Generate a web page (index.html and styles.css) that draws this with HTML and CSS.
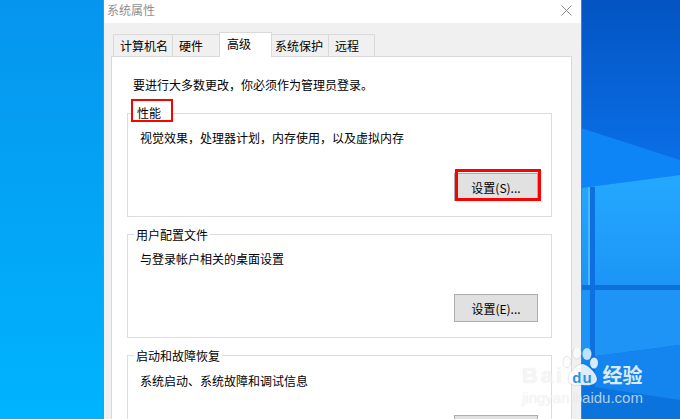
FILE: index.html
```html
<!DOCTYPE html>
<html lang="zh-CN">
<head>
    <meta charset="UTF-8">
    <title>系统属性</title>
    <link rel="stylesheet" href="styles.css">
</head>
<body>
    <svg class="wallpaper" viewBox="0 0 680 419" width="680" height="419">
        <defs>
            <linearGradient id="wall-left" x1="0" y1="0" x2="0" y2="1">
                <stop offset="0" stop-color="#0695ee"/>
                <stop offset="1" stop-color="#00b4ff"/>
            </linearGradient>
            <linearGradient id="wall-right" x1="0" y1="0" x2="0" y2="1">
                <stop offset="0" stop-color="#0454c2"/>
                <stop offset="0.4" stop-color="#0a70e8"/>
                <stop offset="1" stop-color="#0a74dc"/>
            </linearGradient>
            <linearGradient id="pane-top" x1="0" y1="0" x2="0" y2="1">
                <stop offset="0" stop-color="#24a8ff"/>
                <stop offset="1" stop-color="#1c95f6"/>
            </linearGradient>
        </defs>
        <rect width="104" height="419" fill="url(#wall-left)"/>
        <rect x="581" width="99" height="419" fill="url(#wall-right)"/>
        <!-- light wedge and window panes -->
        <polygon points="581,128 680,160 680,175 581,188" fill="#0d85f7"/>
        <polygon points="581,188 680,175 680,285 581,285" fill="url(#pane-top)"/>
        <rect x="581" y="285" width="99" height="5" fill="#0d70dd"/>
        <polygon points="581,290 680,290 680,345 581,358" fill="#1e94f6"/>
        <polygon points="581,358 680,345 680,400 581,385" fill="#1485ee"/>
        <rect x="590" y="187" width="5" height="200" fill="#0c70e0"/>
        <rect x="588" y="187" width="2" height="98" fill="#4db8ff"/>
    </svg>

    <div class="dialog">
        <div class="titlebar">
            <span class="title">系统属性</span>
            <svg class="close" viewBox="0 0 11 11" width="11" height="11">
                <path d="M0.5 0.5 10.5 10.5 M10.5 0.5 0.5 10.5" stroke="#8a8a8a" stroke-width="1" fill="none"/>
            </svg>
        </div>
        <div class="body">
            <div class="tabs">
                <div class="tab">计算机名</div>
                <div class="tab">硬件</div>
                <div class="tab active">高级</div>
                <div class="tab">系统保护</div>
                <div class="tab">远程</div>
            </div>
            <div class="pane">
                <p class="notice">要进行大多数更改，你必须作为管理员登录。</p>

                <div class="group">
                    <span class="legend legend-marked">性能</span>
                    <p class="desc">视觉效果，处理器计划，内存使用，以及虚拟内存</p>
                    <div class="actions">
                        <button class="btn">设置(S)...</button>
                        <span class="btn-mark"></span>
                    </div>
                </div>

                <div class="group">
                    <span class="legend">用户配置文件</span>
                    <p class="desc">与登录帐户相关的桌面设置</p>
                    <div class="actions"><button class="btn">设置(E)...</button></div>
                </div>

                <div class="group">
                    <span class="legend">启动和故障恢复</span>
                    <p class="desc desc-low">系统启动、系统故障和调试信息</p>
                    <div class="actions"><button class="btn"></button></div>
                </div>
            </div>
        </div>
    </div>

    <div class="watermark">
        <svg class="wm-paw" viewBox="0 0 40 40" width="40" height="40">
            <g fill="#fff" stroke="#000" stroke-opacity="0.1">
                <ellipse cx="5" cy="14" rx="4" ry="5.5" fill-opacity="0.6"/>
                <ellipse cx="15" cy="5" rx="4.5" ry="6" fill-opacity="0.6"/>
                <ellipse cx="25" cy="6" rx="4.5" ry="6" fill="#bfe2ff" stroke="none"/>
                <ellipse cx="32" cy="15" rx="4" ry="5.5" fill="#d5ecff" stroke="none"/>
                <path d="M20 16 C26 16 35 26 35 31 C35 37 27 38 20 37 C13 38 6 37 6 31 C6 26 14 16 20 16Z" fill-opacity="0.85"/>
            </g>
        </svg>
        <div class="wm-top">
            <span class="wm-brand">Bai</span>
            <span class="wm-du">du</span>
            <span class="wm-cn">经验</span>
        </div>
        <div class="wm-url">jingyan.baidu.com</div>
    </div>
</body>
</html>
```

FILE: styles.css
```css
*{
    margin: 0;
    padding: 0;
    box-sizing: border-box;
}
html, body{
    width: 680px;
    height: 419px;
    overflow: hidden;
}
body{
    position: relative;
    font-family: "Noto Sans CJK SC", "Liberation Sans", sans-serif;
    font-size: 12px;
    color: #000;
    background: #0a72ea;
}
.wallpaper{
    position: absolute;
    left: 0;
    top: 0;
    display: block;
}
.dialog{
    position: absolute;
    left: 103px;
    top: 0;
    width: 479px;
    height: 419px;
    border-left: 1px solid #6d8aa0;
    border-right: 1px solid #6f7c88;
    background: #f0f0f0;
    overflow: hidden;
}
.titlebar{
    height: 23px;
    background: #fff;
    display: flex;
    align-items: center;
    justify-content: space-between;
    padding: 0 9px 0 3px;
}
.title{
    color: #8f8f8f;
    line-height: 19px;
    margin-bottom: 5px;
}
.close{
    display: block;
    margin-bottom: 3px;
}
.body{
    padding: 9px 9px 0 7px;
}
.tabs{
    display: flex;
    align-items: flex-end;
    height: 24px;
    padding-left: 2px;
    position: relative;
    z-index: 1;
}
.tab{
    height: 22px;
    line-height: 21px;
    padding-left: 6px;
    margin-right: -1px;
    background: #f0f0f0;
    border: 1px solid #d9d9d9;
    border-bottom: none;
    white-space: nowrap;
}
.tab:nth-child(1){ width: 60px; }
.tab:nth-child(2){ width: 48px; }
.tab:nth-child(3){ width: 53px; }
.tab:nth-child(4){ width: 58px; padding-left: 3px; }
.tab:nth-child(5){ width: 47px; }
.tab.active{
    height: 25px;
    padding-left: 7px;
    background: #fff;
    position: relative;
    top: 1px;
}
.pane{
    height: 400px;
    background: #fff;
    border: 1px solid #d9d9d9;
    padding: 19px 19px 0 15px;
}
.notice{
    line-height: 17px;
    margin-bottom: 20px;
    padding-left: 6px;
}
.group{
    position: relative;
    height: 104px;
    border: 1px solid #dcdcdc;
    margin-bottom: 17px;
    padding: 15px 12px 0 12px;
}
.legend{
    position: absolute;
    left: 6px;
    top: -9px;
    padding: 0 2px;
    background: #fff;
    line-height: 17px;
}
.legend-marked{
    left: 3px;
    top: -15px;
    width: 42px;
    height: 23px;
    padding: 5px 0 0 4px;
    border: 2px solid #f00;
    line-height: 14px;
}
.desc{
    line-height: 17px;
}
.desc-low{
    position: relative;
    top: 1px;
}
.actions{
    position: relative;
    display: flex;
    justify-content: flex-end;
    margin-top: 27px;
    margin-right: 1px;
}
.btn{
    width: 84px;
    height: 28px;
    font-family: inherit;
    font-size: 12px;
    color: #000;
    background: #e1e1e1;
    border: 1px solid #adadad;
}
/* red annotation drawn over the button */
.btn-mark{
    position: absolute;
    right: -3px;
    top: -4px;
    width: 86px;
    height: 32px;
    border: 3px solid #f00;
}
.watermark{
    position: absolute;
    left: 522px;
    top: 346px;
    width: 125px;
    color: rgba(255,255,255,0.7);
    font-family: "Liberation Sans", "Noto Sans CJK SC", sans-serif;
    text-shadow: 0 0 1px rgba(0,0,0,0.13);
}
.wm-paw{
    position: absolute;
    left: 40px;
    top: 2px;
}
.wm-top{
    position: relative;
    height: 42px;
    padding-top: 18px;
    display: flex;
    align-items: baseline;
    white-space: nowrap;
}
.wm-brand{
    font-size: 22px;
    font-weight: bold;
    line-height: 24px;
    letter-spacing: 3px;
}
.wm-du{
    margin-left: 7px;
    font-size: 15px;
    font-weight: bold;
    line-height: 16px;
    letter-spacing: 1px;
    color: #2a8fe8;
    text-shadow: none;
}
.wm-cn{
    margin-left: 10px;
    font-size: 20px;
    line-height: 20px;
    font-weight: bold;
    color: rgba(255,255,255,0.85);
    font-family: "Noto Sans CJK SC", sans-serif;
    text-shadow: none;
}
.wm-url{
    margin-top: 2px;
    font-size: 15px;
    line-height: 16px;
    white-space: nowrap;
}
```
